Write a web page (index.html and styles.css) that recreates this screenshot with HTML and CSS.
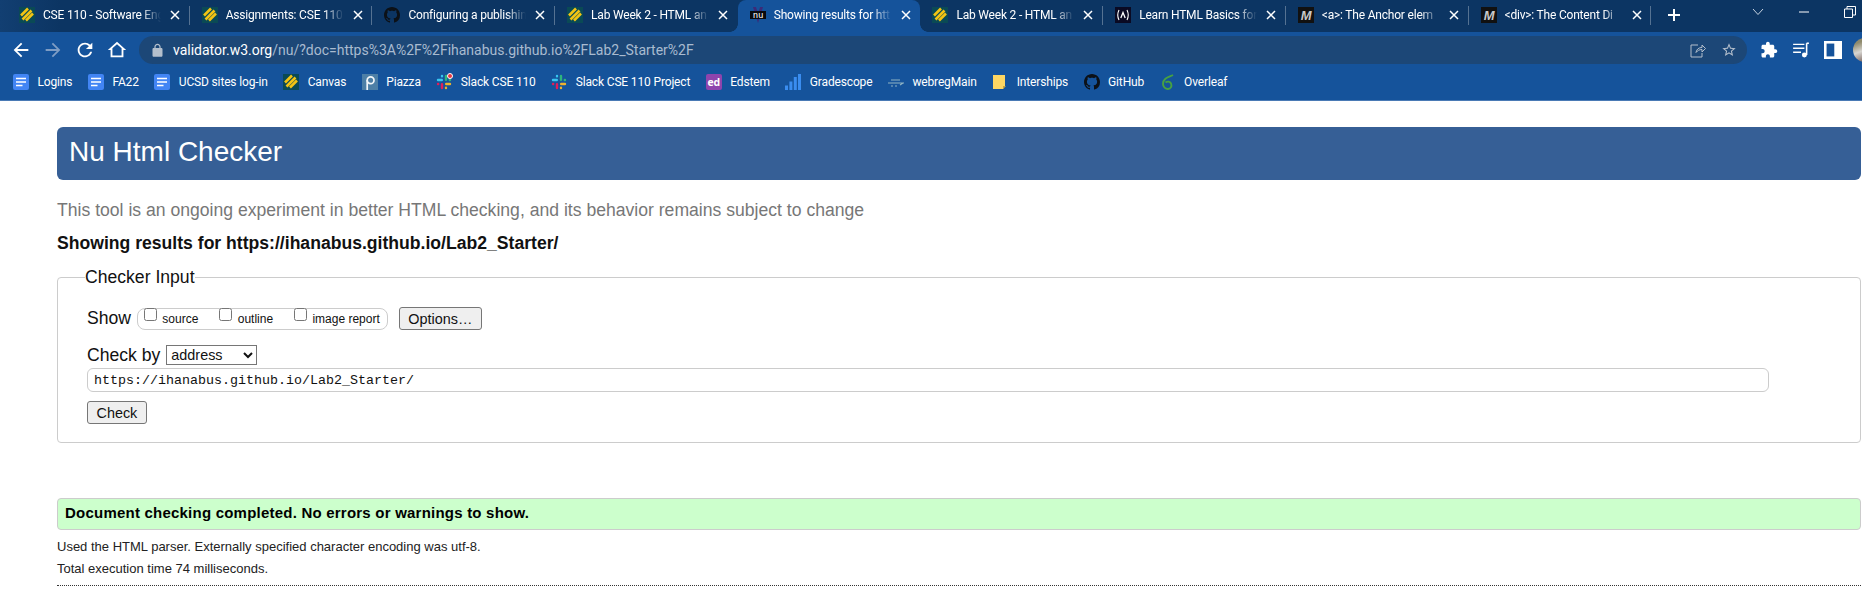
FILE: index.html
```html
<!DOCTYPE html>
<html>
	<head>
		<title>Showing results for https://ihanabus.github.io/Lab2_Starter/</title>
		<link rel="stylesheet" href="styles.css">
	</head>
	<body>
		<svg class="sprite" aria-hidden="true">
			<symbol id="i-canvas" viewBox="0 0 16 16">
				<rect width="16" height="16" fill="#0a4a55"/>
				<path d="M2 8.500L9 1.500M3.500 12.500L12.500 3.500M7 13.500L14 6.500" stroke="#f3c413" stroke-width="2.600"/>
			</symbol>
			<symbol id="i-github" viewBox="0 0 16 16">
				<path fill="#0c1117" d="M8 0C3.58 0 0 3.58 0 8c0 3.54 2.29 6.53 5.47 7.59.4.07.55-.17.55-.38 0-.19-.01-.82-.01-1.49-2.01.37-2.53-.49-2.69-.94-.09-.23-.48-.94-.82-1.13-.28-.15-.68-.52-.01-.53.63-.01 1.08.58 1.23.82.72 1.21 1.87.87 2.33.66.07-.52.28-.87.51-1.07-1.78-.2-3.64-.89-3.64-3.95 0-.87.31-1.59.82-2.15-.08-.2-.36-1.02.08-2.12 0 0 .67-.21 2.2.82.64-.18 1.32-.27 2-.27.68 0 1.36.09 2 .27 1.53-1.04 2.2-.82 2.2-.82.44 1.1.16 1.92.08 2.12.51.56.82 1.27.82 2.15 0 3.07-1.87 3.75-3.65 3.95.29.25.54.73.54 1.48 0 1.07-.01 1.93-.01 2.2 0 .21.15.46.55.38A8.013 8.013 0 0016 8c0-4.42-3.58-8-8-8z"/>
			</symbol>
			<symbol id="i-fcc" viewBox="0 0 16 16">
				<rect width="16" height="16" fill="#0a0a23"/>
				<path d="M4 3Q1.5 8 4 13M12 3Q14.5 8 12 13" stroke="#fff" fill="none" stroke-width="1.1"/>
				<path d="M5.8 11L8 5.5L10.2 11" stroke="#fff" fill="none" stroke-width="1.3"/>
			</symbol>
			<symbol id="i-doc" viewBox="0 0 16 16">
				<rect width="16" height="16" rx="2" fill="#4285f4"/>
				<path d="M3 4.5H13M3 8H13M3 11.5H9.5" stroke="#fff" stroke-width="1.7"/>
			</symbol>
			<symbol id="i-piazza" viewBox="0 0 16 16">
				<rect width="16" height="16" fill="#4d7fa6"/>
				<circle cx="8.6" cy="6.3" r="3.4" fill="none" stroke="#f2f6f9" stroke-width="1.7"/>
				<path d="M5.2 6V16" stroke="#f2f6f9" stroke-width="1.7"/>
			</symbol>
			<symbol id="i-slack" viewBox="0 0 16 16">
				<g fill="none" stroke-linecap="round" stroke-width="2.4">
					<path d="M2 6H5.8M6 2V2.2" stroke="#36c5f0"/>
					<path d="M10 2V5.8M14 6H13.8" stroke="#2eb67d"/>
					<path d="M14 10H10.2M10 14V13.8" stroke="#ecb22e"/>
					<path d="M6 14V10.2M2 10H2.2" stroke="#e01e5a"/>
				</g>
			</symbol>
			<symbol id="i-grade" viewBox="0 0 16 16">
				<path d="M0 11.5H3V16H0zM4.4 7.5H7.4V16H4.4zM8.8 3H11.8V16H8.8zM13 0H16V16H13z" fill="#3a8df0"/>
			</symbol>
			<symbol id="i-webreg" viewBox="0 0 16 16">
				<path d="M3 6H12M0 9H16M3 12H5M7 12H9M12 11L15 9" stroke="#8fb4c4" stroke-width="1.1" fill="none"/>
			</symbol>
			<symbol id="i-keep" viewBox="0 0 16 16">
				<path d="M1 1H13V12L11 15H1z" fill="#fdd663"/>
				<path d="M11 15V12H14z" fill="#c9a53f"/>
			</symbol>
			<symbol id="i-leaf" viewBox="0 0 16 16">
				<path d="M13 1C9 3 3 4 3 10C3 13 5.500 15 8 15C11 15 12 12 11 9.500C10 7.500 7.500 7 5.500 8.500" fill="none" stroke="#47a141" stroke-width="1.900"/>
			</symbol>
			<symbol id="i-x" viewBox="0 0 10 10">
				<path d="M1 1L9 9M9 1L1 9" stroke="#fff" stroke-width="1.500"/>
			</symbol>
		</svg>

		<header class="browser">
			<div class="tabstrip">
				<div class="tab tab-sep">
					<svg class="fav"><use href="#i-canvas"/></svg>
					<span class="tab-title">CSE 110 - Software Eng</span>
					<svg class="tab-close"><use href="#i-x"/></svg>
				</div>
				<div class="tab tab-sep">
					<svg class="fav"><use href="#i-canvas"/></svg>
					<span class="tab-title">Assignments: CSE 110</span>
					<svg class="tab-close"><use href="#i-x"/></svg>
				</div>
				<div class="tab tab-sep">
					<svg class="fav"><use href="#i-github"/></svg>
					<span class="tab-title">Configuring a publishin</span>
					<svg class="tab-close"><use href="#i-x"/></svg>
				</div>
				<div class="tab">
					<svg class="fav"><use href="#i-canvas"/></svg>
					<span class="tab-title">Lab Week 2 - HTML an</span>
					<svg class="tab-close"><use href="#i-x"/></svg>
				</div>
				<div class="tab tab-active">
					<svg class="fav" viewBox="0 0 16 16">
						<path d="M3 0L8 16L13 0H10L8 7L6 0z" fill="#3c2a78"/>
						<rect y="4" width="16" height="8" fill="#0a0a0e"/>
						<text x="8" y="11" class="fav-nu">nu</text>
					</svg>
					<span class="tab-title">Showing results for htt</span>
					<svg class="tab-close"><use href="#i-x"/></svg>
				</div>
				<div class="tab tab-sep">
					<svg class="fav"><use href="#i-canvas"/></svg>
					<span class="tab-title">Lab Week 2 - HTML an</span>
					<svg class="tab-close"><use href="#i-x"/></svg>
				</div>
				<div class="tab tab-sep">
					<svg class="fav"><use href="#i-fcc"/></svg>
					<span class="tab-title">Learn HTML Basics for</span>
					<svg class="tab-close"><use href="#i-x"/></svg>
				</div>
				<div class="tab tab-sep">
					<svg class="fav" viewBox="0 0 16 16">
						<rect width="16" height="16" fill="#111"/>
						<text x="8" y="13" class="fav-mdn">M</text>
					</svg>
					<span class="tab-title">&lt;a&gt;: The Anchor elem</span>
					<svg class="tab-close"><use href="#i-x"/></svg>
				</div>
				<div class="tab tab-sep">
					<svg class="fav" viewBox="0 0 16 16">
						<rect width="16" height="16" fill="#111"/>
						<text x="8" y="13" class="fav-mdn">M</text>
					</svg>
					<span class="tab-title">&lt;div&gt;: The Content Di</span>
					<svg class="tab-close"><use href="#i-x"/></svg>
				</div>
				<svg class="newtab" viewBox="0 0 14 14"><path d="M7 1V13M1 7H13" stroke="#fff" stroke-width="2"/></svg>
				<div class="win-controls">
					<div class="win-btn"><svg viewBox="0 0 12 12"><path d="M1 3L6 8.500L11 3" stroke="#c6d2e0" fill="none"/></svg></div>
					<div class="win-btn"><svg viewBox="0 0 12 12"><path d="M1 6H11" stroke="#fff"/></svg></div>
					<div class="win-btn"><svg viewBox="0 0 12 12"><path d="M0.500 3H8.500V11.500H0.500zM3 3V0.500H11.500V9H8.500" stroke="#fff" fill="none"/></svg></div>
				</div>
			</div>

			<div class="toolbar">
				<svg class="tool" viewBox="0 0 24 24"><path fill="#fff" d="M20 11H7.830l5.590-5.590L12 4l-8 8 8 8 1.410-1.410L7.830 13H20v-2z"/></svg>
				<svg class="tool" viewBox="0 0 24 24"><path fill="#7f9dc4" d="M4 11h12.170l-5.590-5.590L12 4l8 8-8 8-1.410-1.410L16.170 13H4v-2z"/></svg>
				<svg class="tool" viewBox="0 0 24 24"><path fill="#fff" d="M17.650 6.350A7.958 7.958 0 0012 4c-4.420 0-7.990 3.580-7.990 8s3.570 8 7.990 8c3.730 0 6.840-2.550 7.730-6h-2.080A5.990 5.990 0 0112 18c-3.310 0-6-2.690-6-6s2.690-6 6-6c1.660 0 3.140.690 4.220 1.780L13 11h7V4l-2.350 2.350z"/></svg>
				<svg class="tool" viewBox="0 0 24 24"><path fill="#fff" d="M12 5.690l5 4.500V18H7v-7.810l5-4.500M12 3L2 12h3v8h14v-8h3L12 3z"/></svg>
				<div class="omnibox">
					<svg class="lock" viewBox="0 0 24 24"><path fill="#b4bfcc" d="M18 8h-1V6c0-2.760-2.240-5-5-5S7 3.240 7 6v2H6c-1.100 0-2 .9-2 2v10c0 1.100.9 2 2 2h12c1.100 0 2-.9 2-2V10c0-1.100-.9-2-2-2zM9 6c0-1.660 1.340-3 3-3s3 1.340 3 3v2H9V6z"/></svg>
					<span class="url"><span class="url-host">validator.w3.org</span>/nu/?doc=https%3A%2F%2Fihanabus.github.io%2FLab2_Starter%2F</span>
					<svg class="omni-icon" viewBox="0 0 16 16"><path d="M8 3H1V15H12V11M6 10.500C6.500 7 9 5.500 12 5.500V3L15.500 6.500L12 10V7.500C9.500 7.500 7.500 8.500 6 10.500z" stroke="#b4bfcc" fill="none"/></svg>
					<svg class="omni-icon" viewBox="0 0 24 24"><path fill="#b4bfcc" d="M22 9.240l-7.190-.62L12 2 9.190 8.630 2 9.240l5.460 4.730L5.820 21 12 17.270 18.180 21l-1.630-7.030L22 9.240zM12 15.400l-3.760 2.270 1-4.280-3.320-2.880 4.380-.38L12 6.100l1.710 4.040 4.380.38-3.320 2.880 1 4.280L12 15.400z"/></svg>
				</div>
				<div class="tool-right">
					<svg class="tool-r" viewBox="0 0 24 24"><path fill="#fff" d="M20.500 11H19V7c0-1.100-.9-2-2-2h-4V3.500C13 2.120 11.880 1 10.500 1S8 2.120 8 3.500V5H4c-1.100 0-1.990.9-1.990 2v3.800H3.500c1.490 0 2.700 1.210 2.700 2.700s-1.210 2.700-2.700 2.700H2V20c0 1.100.9 2 2 2h3.800v-1.500c0-1.490 1.210-2.700 2.700-2.700 1.490 0 2.700 1.210 2.700 2.700V22H17c1.100 0 2-.9 2-2v-4h1.500c1.380 0 2.500-1.120 2.500-2.500S21.880 11 20.500 11z"/></svg>
					<svg class="tool-r" viewBox="0 0 16 16"><path d="M1 3H11M1 6.500H11M1 10H8" stroke="#fff" stroke-width="1.300"/><path d="M13 2V12.500" stroke="#fff" stroke-width="1.400"/><path d="M13 2H15" stroke="#fff" stroke-width="1.400"/><circle cx="11" cy="12.500" r="2.200" fill="#fff"/></svg>
					<svg class="tool-r" viewBox="0 0 14 14"><path d="M0 0H14V14H0z" fill="#fff"/><path d="M2 2H8V12H2z" fill="#15539b"/></svg>
					<div class="avatar"></div>
				</div>
			</div>

			<nav class="bookmarks">
				<a class="bm"><svg class="fav"><use href="#i-doc"/></svg>Logins</a>
				<a class="bm"><svg class="fav"><use href="#i-doc"/></svg>FA22</a>
				<a class="bm"><svg class="fav"><use href="#i-doc"/></svg>UCSD sites log-in</a>
				<a class="bm"><svg class="fav"><use href="#i-canvas"/></svg>Canvas</a>
				<a class="bm"><svg class="fav"><use href="#i-piazza"/></svg>Piazza</a>
				<a class="bm"><span class="fav-wrap"><svg class="fav"><use href="#i-slack"/></svg><span class="notif"></span></span>Slack CSE 110</a>
				<a class="bm"><svg class="fav"><use href="#i-slack"/></svg>Slack CSE 110 Project</a>
				<a class="bm"><span class="fav fav-ed">ed</span>Edstem</a>
				<a class="bm"><svg class="fav"><use href="#i-grade"/></svg>Gradescope</a>
				<a class="bm"><svg class="fav"><use href="#i-webreg"/></svg>webregMain</a>
				<a class="bm"><svg class="fav"><use href="#i-keep"/></svg>Interships</a>
				<a class="bm"><svg class="fav"><use href="#i-github"/></svg>GitHub</a>
				<a class="bm"><svg class="fav"><use href="#i-leaf"/></svg>Overleaf</a>
			</nav>
		</header>

		<main class="page">
			<h1 class="page-title">Nu Html Checker</h1>
			<p class="tagline">This tool is an ongoing experiment in better HTML checking, and its behavior remains subject to change</p>
			<h2 class="results-for">Showing results for https://ihanabus.github.io/Lab2_Starter/</h2>

			<form class="checker">
				<fieldset class="checker-box">
					<legend class="checker-legend">Checker Input</legend>
					<div class="row row-show">
						<span class="row-label">Show</span>
						<div class="show-group">
							<label class="show-opt"><input type="checkbox"> source</label>
							<label class="show-opt"><input type="checkbox"> outline</label>
							<label class="show-opt"><input type="checkbox"> image report</label>
						</div>
						<button type="button" class="btn btn-options">Options…</button>
					</div>
					<div class="row row-by">
						<label class="row-label" for="docselect">Check by</label>
						<select id="docselect" class="doc-select">
							<option>address</option>
						</select>
					</div>
					<input class="doc-url" value="https://ihanabus.github.io/Lab2_Starter/">
					<button type="button" class="btn btn-check">Check</button>
				</fieldset>
			</form>

			<p class="success">Document checking completed. No errors or warnings to show.</p>
			<p class="details">Used the HTML parser. Externally specified character encoding was utf-8.</p>
			<p class="details">Total execution time 74 milliseconds.</p>
			<hr class="rule">
		</main>
	</body>
</html>
```

FILE: styles.css
```css
html, body {
	height: 100%;
}
body {
	margin: 0;
	overflow: hidden;
	background: #fff;
	font-family: "Liberation Sans", Arial, sans-serif;
	font-size: 17.6px;
	color: #111;
}
.sprite {
	display: block;
	width: 0;
	height: 0;
}
.fav-nu {
	fill: #fff;
	font: 9px "DejaVu Sans Mono", monospace;
	text-anchor: middle;
}
.fav-mdn {
	fill: #c9c9c9;
	font: italic bold 13px "Liberation Sans", sans-serif;
	text-anchor: middle;
}

/* browser chrome */
.browser {
	font-family: Roboto, "Open Sans", sans-serif;
	font-size: 12px;
	letter-spacing: -0.2px;
	color: #fff;
	border-bottom: solid 1px #4a7ab5;
}
.tabstrip {
	display: flex;
	height: 32px;
	padding-left: 7px;
	background: linear-gradient(90deg, #123f72, #0c3563 60px);
}
.tab {
	position: relative;
	flex: 0 0 182.7px;
	box-sizing: border-box;
	display: flex;
	align-items: center;
	height: 30px;
	padding-left: 12px;
}
.tab-sep::after {
	content: "";
	position: absolute;
	right: 0;
	top: 6px;
	height: 19px;
	width: 1px;
	background: rgba(255, 255, 255, 0.3);
}
.tab-active {
	height: 36px;
	padding-bottom: 6px;
	background: #15539b;
	border-radius: 8px 8px 0 0;
}
.tab-active::before, .tab-active::after {
	content: "";
	position: absolute;
	top: 24px;
	width: 8px;
	height: 8px;
}
.tab-active::before {
	left: -8px;
	background: radial-gradient(circle at 0 0, transparent 7.500px, #15539b 8px);
}
.tab-active::after {
	right: -8px;
	background: radial-gradient(circle at 100% 0, transparent 7.500px, #15539b 8px);
}
.fav {
	flex: none;
	display: block;
	width: 16px;
	height: 16px;
}
.fav-wrap {
	position: relative;
	flex: none;
	display: block;
	width: 16px;
	height: 16px;
}
.notif {
	position: absolute;
	right: -1px;
	top: -1px;
	width: 6px;
	height: 6px;
	border-radius: 50%;
	background: #e8333f;
	border: solid 1px #fff;
	box-sizing: border-box;
}
.fav-ed {
	background: #8e44ad;
	border-radius: 2px;
	font: bold 10.500px/16px "Open Sans", sans-serif;
	text-align: center;
}
.tab-title {
	flex: none;
	width: 120px;
	margin-left: 8px;
	overflow: hidden;
	white-space: nowrap;
	-webkit-mask-image: linear-gradient(90deg, #000 98px, transparent 118px);
	mask-image: linear-gradient(90deg, #000 98px, transparent 118px);
}
.tab-close {
	flex: none;
	width: 10px;
	height: 10px;
	margin-left: 7px;
}
.newtab {
	flex: none;
	width: 14px;
	height: 14px;
	margin: 8px 0 0 16px;
}
.win-controls {
	display: flex;
	margin-left: auto;
	margin-right: -11px;
}
.win-btn {
	width: 46px;
	display: flex;
	justify-content: center;
	padding-top: 6px;
}
.win-btn svg {
	width: 12px;
	height: 12px;
}

.toolbar {
	display: flex;
	align-items: center;
	height: 32px;
	padding-left: 10px;
	box-sizing: border-box;
	padding-top: 4px;
	background: #15539b;
}
.tool {
	flex: none;
	width: 22px;
	height: 22px;
	margin-right: 10px;
}
.omnibox {
	flex: none;
	display: flex;
	align-items: center;
	box-sizing: border-box;
	width: 1608px;
	height: 28px;
	margin-left: 1px;
	padding: 0 8px 0 11px;
	background: #1c4777;
	border-radius: 14px;
}
.lock {
	flex: none;
	width: 15px;
	height: 15px;
}
.url {
	flex: 1;
	margin-left: 8px;
	font-size: 14px;
	letter-spacing: 0;
	color: #a9bbd0;
	white-space: nowrap;
}
.url-host {
	color: #fff;
}
.omni-icon {
	flex: none;
	width: 16px;
	height: 16px;
	margin-right: 15px;
}
.omni-icon:last-child {
	margin-right: 2px;
}
.tool-right {
	display: flex;
	align-items: center;
	gap: 14px;
	margin-left: 13px;
}
.tool-r {
	flex: none;
	width: 18px;
	height: 18px;
}
.avatar {
	flex: none;
	width: 24px;
	height: 24px;
	margin-left: -3px;
	border-radius: 50%;
	background: linear-gradient(160deg, #8f8a6c 20%, #d8d6d2 50%, #6f5a55 90%);
}

.bookmarks {
	display: flex;
	align-items: center;
	gap: 15.500px;
	height: 36px;
	padding-left: 13px;
	background: #15539b;
}
.bm {
	display: flex;
	align-items: center;
	gap: 8.500px;
	letter-spacing: -0.150px;
	white-space: nowrap;
}

/* checker page */
.page {
	padding: 26px 1px 0 57px;
}
.page-title {
	margin: 0;
	height: 53px;
	padding-left: 12px;
	background: #365f96;
	border-radius: 6px;
	color: #fff;
	font-size: 28px;
	font-weight: normal;
	line-height: 50px;
}
.tagline {
	margin: 20px 0 0;
	color: #777;
	font-size: 17.6px;
	line-height: 20px;
}
.results-for {
	margin: 13px 0 0;
	color: #111;
	font-size: 17.6px;
	line-height: 20px;
}
.checker-box {
	margin: 14px 0 0;
	min-width: 0;
	padding: 0 0 18px 29px;
	border: solid 1px #ccc;
	border-radius: 4px;
}
.checker-legend {
	margin-left: -2px;
	padding: 0;
	line-height: 20px;
}
.row {
	display: flex;
	align-items: center;
}
.row-show {
	margin-top: 20px;
	height: 23px;
}
.row-label {
	margin-right: 6px;
}
.show-group {
	display: flex;
	box-sizing: border-box;
	height: 22px;
	align-items: center;
	padding: 0 7px 0 6px;
	border: solid 1px #ccc;
	border-radius: 8px;
}
.show-opt {
	display: block;
	margin-right: 21px;
	font-size: 12px;
	line-height: 20px;
}
.show-opt:last-child {
	margin-right: 0;
}
.show-opt input {
	margin: 0 2px 0 0;
	vertical-align: 2px;
}
.btn {
	box-sizing: border-box;
	height: 23px;
	padding: 0 8.500px;
	background: #efefef;
	border: solid 1px #767676;
	border-radius: 3px;
	color: #111;
	font: 14.400px "Liberation Sans", sans-serif;
}
.btn-options {
	margin-left: 11px;
}
.row-by {
	margin-top: 15px;
	height: 20px;
}
.doc-select {
	box-sizing: border-box;
	width: 91px;
	height: 20px;
	padding: 0;
	font: 14.400px "Liberation Sans", sans-serif;
	color: #111;
	background: #fff;
}
.doc-url {
	display: block;
	box-sizing: border-box;
	width: 1682px;
	height: 24px;
	margin-top: 3px;
	padding: 0 6px;
	border: solid 1px #ccc;
	border-radius: 6px;
	color: #111;
	font: 13.330px "Liberation Mono", monospace;
}
.btn-check {
	display: block;
	margin-top: 9px;
}
.success {
	margin: 55px 0 0;
	box-sizing: border-box;
	height: 32px;
	padding-left: 7px;
	background: #ccffcc;
	border: solid 1px #ccc;
	border-radius: 4px;
	color: #000;
	font-size: 15px;
	font-weight: bold;
	letter-spacing: 0.22px;
	line-height: 28px;
}
.details {
	margin: 0;
	font-size: 13px;
	line-height: 22px;
	color: #222;
}
.success + .details {
	margin-top: 6px;
}
.rule {
	margin: 5px 0 0;
	border: 0;
	border-top: dotted 1px #333;
}
```
